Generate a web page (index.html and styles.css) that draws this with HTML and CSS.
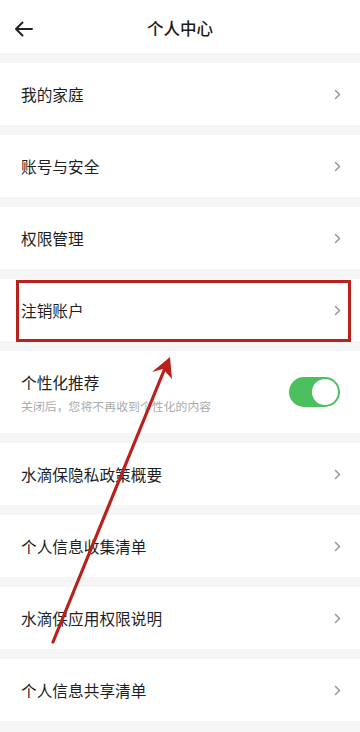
FILE: index.html
```html
<!DOCTYPE html>
<html lang="zh">
<head>
<meta charset="utf-8">
<meta name="viewport" content="width=360">
<title>个人中心</title>
<link rel="stylesheet" href="styles.css">
</head>
<body>
<div class="page">
  <header class="header">
    <svg class="back" width="20" height="16" viewBox="0 0 20 16"><path d="M2 8 H18 M8.5 1.5 L2 8 L8.5 14.5" fill="none" stroke="#222" stroke-width="2" stroke-linecap="round" stroke-linejoin="round"/></svg>
    <h1 class="title">个人中心</h1>
  </header>
  <ul class="list">
    <li class="row"><span class="label">我的家庭</span><svg class="chev" width="7" height="11" viewBox="0 0 7 11"><path d="M1.5 1.5 L5.5 5.5 L1.5 9.5" fill="none" stroke="#9a9a9a" stroke-width="1.6" stroke-linecap="round" stroke-linejoin="round"/></svg></li>
    <li class="row"><span class="label">账号与安全</span><svg class="chev" width="7" height="11" viewBox="0 0 7 11"><path d="M1.5 1.5 L5.5 5.5 L1.5 9.5" fill="none" stroke="#9a9a9a" stroke-width="1.6" stroke-linecap="round" stroke-linejoin="round"/></svg></li>
    <li class="row"><span class="label">权限管理</span><svg class="chev" width="7" height="11" viewBox="0 0 7 11"><path d="M1.5 1.5 L5.5 5.5 L1.5 9.5" fill="none" stroke="#9a9a9a" stroke-width="1.6" stroke-linecap="round" stroke-linejoin="round"/></svg></li>
    <li class="row"><span class="label">注销账户</span><svg class="chev" width="7" height="11" viewBox="0 0 7 11"><path d="M1.5 1.5 L5.5 5.5 L1.5 9.5" fill="none" stroke="#9a9a9a" stroke-width="1.6" stroke-linecap="round" stroke-linejoin="round"/></svg></li>
    <li class="row row-toggle">
      <div class="texts">
        <span class="label">个性化推荐</span>
        <span class="sub">关闭后，您将不再收到个性化的内容</span>
      </div>
      <div class="toggle"><div class="knob"></div></div>
    </li>
    <li class="row"><span class="label">水滴保隐私政策概要</span><svg class="chev" width="7" height="11" viewBox="0 0 7 11"><path d="M1.5 1.5 L5.5 5.5 L1.5 9.5" fill="none" stroke="#9a9a9a" stroke-width="1.6" stroke-linecap="round" stroke-linejoin="round"/></svg></li>
    <li class="row"><span class="label">个人信息收集清单</span><svg class="chev" width="7" height="11" viewBox="0 0 7 11"><path d="M1.5 1.5 L5.5 5.5 L1.5 9.5" fill="none" stroke="#9a9a9a" stroke-width="1.6" stroke-linecap="round" stroke-linejoin="round"/></svg></li>
    <li class="row"><span class="label">水滴保应用权限说明</span><svg class="chev" width="7" height="11" viewBox="0 0 7 11"><path d="M1.5 1.5 L5.5 5.5 L1.5 9.5" fill="none" stroke="#9a9a9a" stroke-width="1.6" stroke-linecap="round" stroke-linejoin="round"/></svg></li>
    <li class="row"><span class="label">个人信息共享清单</span><svg class="chev" width="7" height="11" viewBox="0 0 7 11"><path d="M1.5 1.5 L5.5 5.5 L1.5 9.5" fill="none" stroke="#9a9a9a" stroke-width="1.6" stroke-linecap="round" stroke-linejoin="round"/></svg></li>
  </ul>
  <div class="highlight"></div>
  <svg class="annot" width="360" height="732" viewBox="0 0 360 732">
    <line x1="53" y1="642" x2="165" y2="368" stroke="#b8221a" stroke-width="3.2" stroke-linecap="round"/>
    <path d="M170 357 L152 372 L163 369 L172 379 Z" fill="#b8221a"/>
  </svg>
</div>
</body>
</html>
```
FILE: styles.css
```css
* { box-sizing: border-box; }
html, body { margin: 0; padding: 0; }
body {
  background: #f5f5f5;
  font-family: "Noto Sans CJK SC", "Noto Sans", sans-serif;
  color: #222;
}
.page {
  position: relative;
  width: 360px;
  height: 732px;
  overflow: hidden;
  background: #f5f5f5;
}
.header {
  height: 53px;
  background: #fff;
  display: flex;
  align-items: center;
  justify-content: center;
  padding-top: 3px;
  position: relative;
}
.back {
  position: absolute;
  left: 14px;
  top: 21px;
}
.title {
  margin: 0;
  font-size: 16.5px;
  font-weight: 500;
  color: #1a1a1a;
  letter-spacing: 0;
}
.list {
  list-style: none;
  margin: 0;
  padding: 10px 0 0;
  display: flex;
  flex-direction: column;
  gap: 10px;
}
.row {
  height: 62px;
  background: #fff;
  display: flex;
  align-items: center;
  justify-content: space-between;
  padding: 0 19px 0 21px;
}
.label {
  font-size: 15.7px;
  color: #1f1f1f;
  font-weight: 400;
}
.chev { display: block; }
.row-toggle {
  height: 82px;
  padding-right: 20px;
}
.texts {
  display: flex;
  flex-direction: column;
  gap: 3px;
}
.sub {
  font-size: 11.9px;
  color: #ababab;
}
.toggle {
  width: 51px;
  height: 30px;
  border-radius: 15px;
  background: #4cbf5e;
  display: flex;
  align-items: center;
  justify-content: flex-end;
  padding: 2px;
}
.knob {
  width: 26px;
  height: 26px;
  border-radius: 50%;
  background: #fff;
}
.highlight {
  position: absolute;
  left: 16px;
  top: 280px;
  width: 335px;
  height: 62px;
  border: 3px solid #b8221a;
}
.annot {
  position: absolute;
  left: 0;
  top: 0;
  pointer-events: none;
}
```
